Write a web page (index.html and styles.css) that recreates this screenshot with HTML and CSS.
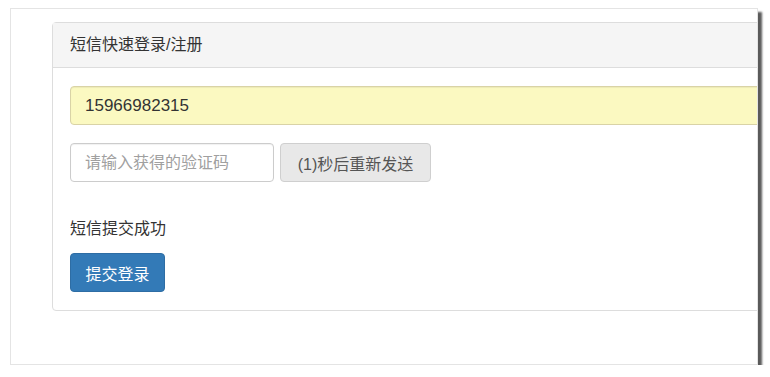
FILE: index.html
```html
<!DOCTYPE html>
<html lang="zh-CN">
<head>
  <meta charset="UTF-8" />
  <title>短信快速登录/注册</title>
  <link rel="stylesheet" href="styles.css">
</head>
<body>
  <div class="window">
    <div class="panel">
      <div class="panel-heading">短信快速登录/注册</div>
      <div class="panel-body">
        <input type="text" class="form-control phone" value="15966982315" />
        <div class="code-row">
          <input type="text" class="form-control code" placeholder="请输入获得的验证码" />
          <button class="btn btn-default" disabled>(1)秒后重新发送</button>
        </div>
        <p class="msg">短信提交成功</p>
        <button class="btn btn-primary">提交登录</button>
      </div>
    </div>
  </div>
</body>
</html>
```

FILE: styles.css
```css
body {
  margin: 0;
  background: #fff;
  color: #333;
  font-family: "Liberation Sans", "Noto Sans CJK SC", sans-serif;
  font-size: 16px;
}
.window {
  box-sizing: border-box;
  margin: 8px 0 0 10px;
  width: 748px;
  height: 357px;
  border: 1px solid #e4e4e4;
  box-shadow: 4px 4px 2px #5a5a5a;
  overflow: hidden;
  padding: 13px 0 0 41px;
}
.panel {
  width: 760px;
  border: 1px solid #ddd;
  border-radius: 4px;
  background: #fff;
}
.panel-heading {
  background: #f5f5f5;
  border-bottom: 1px solid #ddd;
  padding: 12px 17px;
  line-height: 20px;
  font-size: 16px;
  color: #333;
}
.panel-body {
  padding: 18px 17px;
}
.form-control {
  display: block;
  box-sizing: border-box;
  height: 39px;
  border: 1px solid #ccc;
  border-radius: 4px;
  padding: 6px 14px;
  font-family: inherit;
  font-size: 16px;
  color: #333;
  box-shadow: inset 0 1px 1px rgba(0,0,0,.06);
  outline: none;
}
.phone {
  width: 100%;
  background: #fbf9c1;
  border-color: #d9d3a6;
  font-size: 17px;
}
.code-row {
  display: flex;
  gap: 6px;
  margin-top: 18px;
}
.code {
  width: 204px;
  background: #fff;
}
.code::placeholder {
  color: #a0a0a0;
}
.btn {
  display: block;
  box-sizing: border-box;
  height: 39px;
  border: 1px solid #ccc;
  border-radius: 4px;
  padding: 0 15px;
  font-family: inherit;
  font-size: 16px;
  white-space: nowrap;
  cursor: pointer;
}
.btn-default {
  width: 151px;
  background: #e8e8e8;
  color: #555;
  border-color: #cfcfcf;
}
.msg {
  margin: 37px 0 14px;
  line-height: 20px;
  font-size: 16px;
}
.btn-primary {
  width: 95px;
  padding: 0 10px;
  background: #337ab7;
  border-color: #2e6da4;
  color: #fff;
}
```
